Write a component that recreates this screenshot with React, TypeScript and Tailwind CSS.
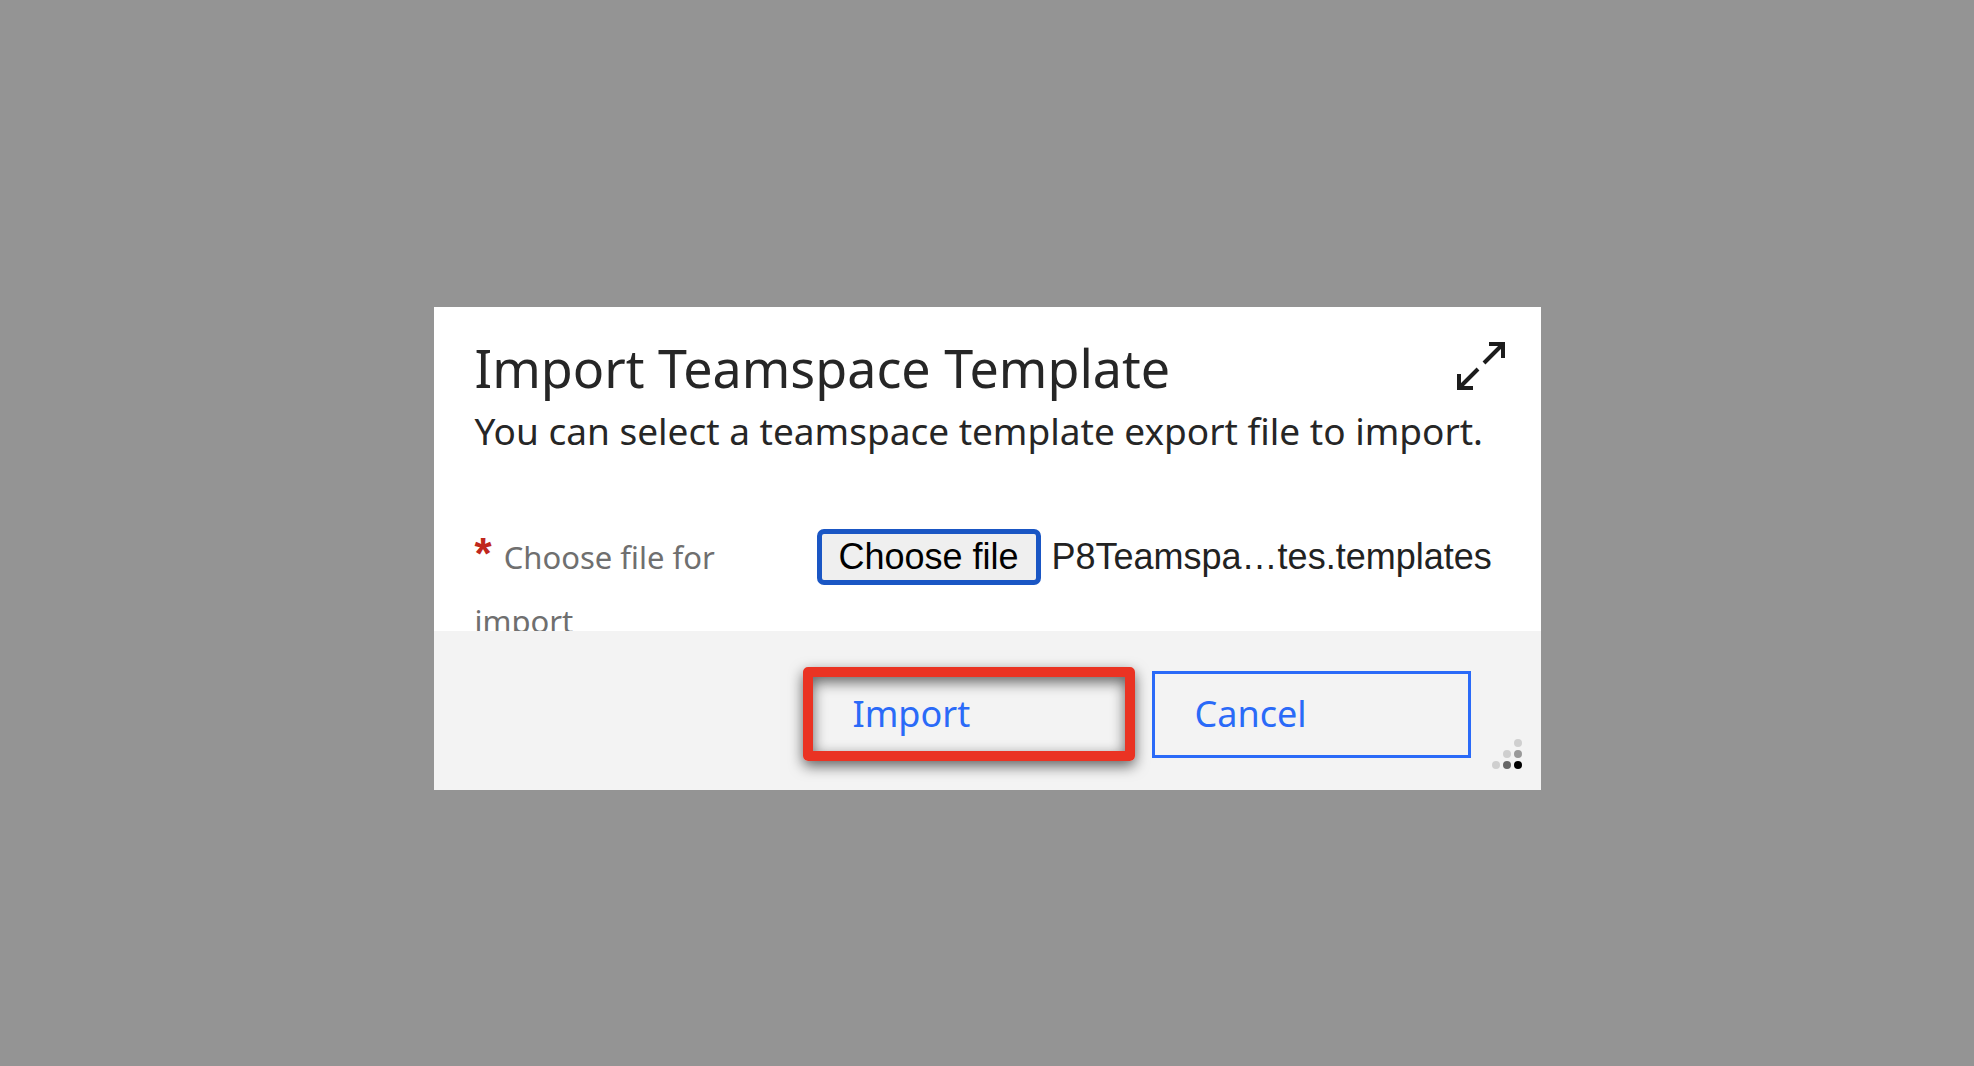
import { useRef } from "react";

function ExpandIcon() {
  return (
    <svg viewBox="0 0 48 48" className="size-12" fill="none" stroke="#1c1c1c" strokeWidth="4" aria-hidden="true">
      <path d="M32 2H46V16M2 32V46H16" />
      <path d="M46 2L27 21M2 46L21 27" />
    </svg>
  );
}

function ResizeHandle() {
  return (
    <svg viewBox="0 0 30 30" className="absolute right-[19px] bottom-[21px] size-[30px]" aria-hidden="true">
      <circle cx="26" cy="4" r="4" fill="#cfcfcf" />
      <circle cx="15" cy="15" r="4" fill="#cfcfcf" />
      <circle cx="26" cy="15" r="4" fill="#999999" />
      <circle cx="4" cy="26" r="4" fill="#cfcfcf" />
      <circle cx="15" cy="26" r="4" fill="#666666" />
      <circle cx="26" cy="26" r="4" fill="#000000" />
    </svg>
  );
}

export default function App() {
  const fileInput = useRef<HTMLInputElement>(null);

  return (
    <main className="flex min-h-screen items-start justify-center bg-[#949494] pt-[307px] font-['Noto_Sans',sans-serif] text-[#262626]">
      <section
        role="dialog"
        aria-labelledby="dialog-title"
        aria-describedby="dialog-description"
        className="relative w-full max-w-[1107px] bg-white"
      >
        <header className="pt-7 pr-9 pl-[41px]">
          <div className="flex items-start justify-between">
            <h1 id="dialog-title" className="text-[52px] leading-[66px]">
              Import Teamspace Template
            </h1>
            <button type="button" aria-label="Maximize" className="mt-[7px]">
              <ExpandIcon />
            </button>
          </div>
          <p id="dialog-description" className="text-[37px] leading-[60px] whitespace-nowrap">
            You can select a teamspace template export file to import.
          </p>
        </header>

        <div className="mt-16 flex h-[106px] items-start overflow-hidden pr-9 pl-[41px]">
          <label htmlFor="template-file" className="mr-10 w-[302px] shrink-0 text-[31px] leading-[64px] text-[#6f6f6f]">
            <span className="mr-1 font-['Liberation_Sans',sans-serif] text-[44px] leading-none font-bold text-[#c0271c]">*</span>{" "}
            Choose file for import
          </label>
          <div className="mt-1 flex items-center gap-[11px] font-['Liberation_Sans',sans-serif] text-[36px] text-[#222222]">
            <button
              type="button"
              onClick={() => fileInput.current?.click()}
              className="h-14 w-[224px] shrink-0 rounded-[7px] border-5 border-[#1a56c4] bg-[#efefef] leading-10 whitespace-nowrap text-black"
            >
              Choose file
            </button>
            <input ref={fileInput} id="template-file" type="file" required className="sr-only" />
            <span className="whitespace-nowrap">P8Teamspa…tes.templates</span>
          </div>
        </div>

        <footer className="flex items-center justify-end gap-[17px] bg-[#f3f3f3] pt-9 pr-[70px] pb-[29px] text-[36px] leading-[48px] text-[#2a6af8]">
          <button
            type="button"
            className="h-[94px] w-[332px] rounded-[5px] border-10 border-[#ea3323] pl-10 text-left shadow-[0_5px_14px_rgba(0,0,0,0.6),inset_0_5px_14px_rgba(0,0,0,0.6)]"
          >
            Import
          </button>
          <button type="button" className="h-[87px] w-[319px] border-3 border-[#2a6af8] pl-10 text-left">
            Cancel
          </button>
        </footer>
        <ResizeHandle />
      </section>
    </main>
  );
}
